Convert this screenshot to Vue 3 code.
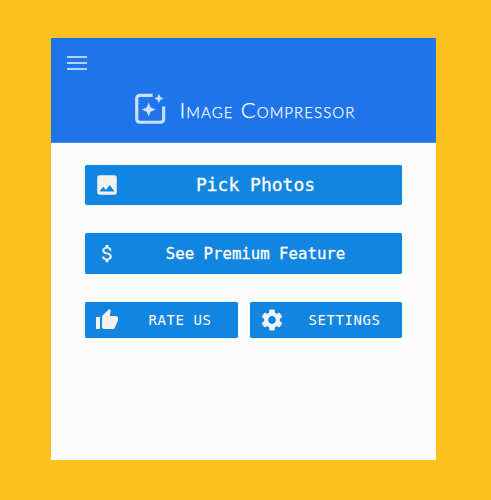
<script setup>
const iconPaths = {
  image: 'M21 19V5c0-1.1-.9-2-2-2H5c-1.1 0-2 .9-2 2v14c0 1.1.9 2 2 2h14c1.1 0 2-.9 2-2zM8.5 13.5l2.5 3.01L14.5 12l4.5 6H5l3.5-4.5z',
  dollar: 'M11.8 10.9c-2.27-.59-3-1.2-3-2.15 0-1.09 1.01-1.85 2.7-1.85 1.78 0 2.44.85 2.5 2.1h2.21c-.07-1.72-1.12-3.3-3.21-3.81V3h-3v2.16c-1.94.42-3.5 1.68-3.5 3.61 0 2.31 1.91 3.46 4.7 4.13 2.5.6 3 1.48 3 2.41 0 .69-.49 1.79-2.7 1.79-2.06 0-2.87-.92-2.98-2.1h-2.2c.12 2.19 1.76 3.42 3.68 3.83V21h3v-2.15c1.95-.37 3.5-1.5 3.5-3.55 0-2.84-2.43-3.81-4.7-4.4z',
  thumb: 'M1 21h4V9H1v12zm22-11c0-1.1-.9-2-2-2h-6.31l.95-4.57.03-.32c0-.41-.17-.79-.44-1.06L14.17 1 7.59 7.59C7.22 7.95 7 8.45 7 9v10c0 1.1.9 2 2 2h9c.83 0 1.54-.5 1.84-1.22l3.02-7.05c.09-.23.14-.47.14-.73v-2z',
  gear: 'M19.14 12.94c.04-.3.06-.61.06-.94 0-.32-.02-.64-.07-.94l2.03-1.58c.18-.14.23-.41.12-.61l-1.92-3.32c-.12-.22-.37-.29-.59-.22l-2.39.96c-.5-.38-1.03-.7-1.62-.94l-.36-2.54c-.04-.24-.24-.41-.48-.41h-3.84c-.24 0-.43.17-.47.41l-.36 2.54c-.59.24-1.13.57-1.62.94l-2.39-.96c-.22-.08-.47 0-.59.22L2.74 8.87c-.12.21-.08.47.12.61l2.03 1.58c-.05.3-.09.63-.09.94s.02.64.07.94l-2.03 1.58c-.18.14-.23.41-.12.61l1.92 3.32c.12.22.37.29.59.22l2.39-.96c.5.38 1.03.7 1.62.94l.36 2.54c.05.24.24.41.48.41h3.84c.24 0 .44-.17.47-.41l.36-2.54c.59-.24 1.13-.56 1.62-.94l2.39.96c.22.08.47 0 .59-.22l1.92-3.32c.12-.22.07-.47-.12-.61l-2.01-1.58zM12 15.6c-1.98 0-3.6-1.62-3.6-3.6s1.62-3.6 3.6-3.6 3.6 1.62 3.6 3.6-1.62 3.6-3.6 3.6z'
}
</script>

<template>
  <div class="page">
    <div class="card">
      <header class="header">
        <button class="menu" aria-label="Menu">
          <span></span><span></span><span></span>
        </button>
        <div class="brand">
          <svg class="logo" viewBox="0 0 24 24">
            <path fill="#c9e0fb" d="M19 11v8c0 .55-.45 1-1 1H5c-.55 0-1-.45-1-1V6c0-.55.45-1 1-1h8V3H5C3.3 3 2 4.3 2 6v13c0 1.7 1.3 3 3 3h13c1.7 0 3-1.3 3-3v-8h-2z" />
            <path fill="#c9e0fb" d="M10.5 8.6l1.3 3.1 3.1 1.3-3.1 1.3-1.3 3.1-1.3-3.1L6.1 13l3.1-1.3zM17 3l.9 2.1L20 6l-2.1.9L17 9l-.9-2.1L14 6l2.1-.9z" />
          </svg>
          <h1 class="title">Image Compressor</h1>
        </div>
      </header>

      <main class="actions">
        <button class="btn btn-large">
          <svg class="icon" viewBox="0 0 24 24"><path :d="iconPaths.image" /></svg>
          <span class="label">Pick Photos</span>
        </button>
        <button class="btn btn-medium">
          <svg class="icon icon-dollar" viewBox="0 0 24 24"><path :d="iconPaths.dollar" /></svg>
          <span class="label">See Premium Feature</span>
        </button>
        <div class="row">
          <button class="btn btn-small">
            <svg class="icon icon-thumb" viewBox="0 0 24 24"><path :d="iconPaths.thumb" /></svg>
            <span class="label">RATE US</span>
          </button>
          <button class="btn btn-small">
            <svg class="icon" viewBox="0 0 24 24"><path :d="iconPaths.gear" /></svg>
            <span class="label">SETTINGS</span>
          </button>
        </div>
      </main>
    </div>
  </div>
</template>

<style>
html, body {
  margin: 0;
  background: #ffc11e;
}
</style>

<style scoped>
.page {
  width: 491px;
  height: 500px;
  padding: 38px 55px 40px 51px;
  box-sizing: border-box;
  background: #ffc11e;
}

.card {
  height: 100%;
  background: #fcfcfc;
}

.header {
  height: 105px;
  box-sizing: border-box;
  padding: 18px 16px 0;
  background: #1e74eb;
  border-bottom: 1px solid #3f8bf0;
}

.menu {
  display: flex;
  flex-direction: column;
  gap: 4px;
  width: 20px;
  padding: 0;
  border: 0;
  background: none;
}

.menu span {
  height: 2px;
  background: #b5d3f8;
}

.brand {
  display: flex;
  align-items: center;
  justify-content: center;
  gap: 9px;
  margin-top: 19px;
  padding-left: 1px;
}

.logo {
  width: 38px;
  height: 38px;
}

.title {
  margin: 2px 0 0;
  color: #fff;
  font-family: Lato, sans-serif;
  font-size: 22px;
  font-weight: 300;
  font-variant: small-caps;
  letter-spacing: 1.1px;
  -webkit-text-stroke: 0.25px #fff;
}

.actions {
  display: flex;
  flex-direction: column;
  padding: 21.5px 34px 0;
}

.btn {
  display: flex;
  align-items: center;
  width: 100%;
  padding: 0 9px;
  border: 0;
  border-radius: 2px;
  background: #1185e0;
  color: #fff;
  font-family: "DejaVu Sans Mono", monospace;
  box-sizing: border-box;
  box-shadow: 0 0 1px rgba(17, 133, 224, 0.6);
}

.btn-large {
  height: 40.5px;
  font-size: 18px;
  margin-bottom: 28px;
  -webkit-text-stroke: 0.3px #fff;
}

.btn-medium {
  height: 41px;
  font-size: 15.7px;
  margin-bottom: 28px;
  -webkit-text-stroke: 0.3px #fff;
}

.btn-small {
  height: 36px;
  font-size: 14px;
  letter-spacing: 0.6px;
}

.icon {
  flex: none;
  width: 26px;
  height: 26px;
  fill: #f2f2f2;
}

.icon-dollar {
  width: 23px;
  height: 23px;
  margin: 0 1.5px;
}

.icon-thumb {
  width: 24px;
  height: 24px;
  margin: 0 1px;
}

.label {
  flex: 1;
  text-align: center;
  padding-right: 2px;
}

.btn-small .label {
  padding: 0 0 0 11px;
}

.row {
  display: grid;
  grid-template-columns: 153px 152px;
  gap: 12px;
}
</style>
